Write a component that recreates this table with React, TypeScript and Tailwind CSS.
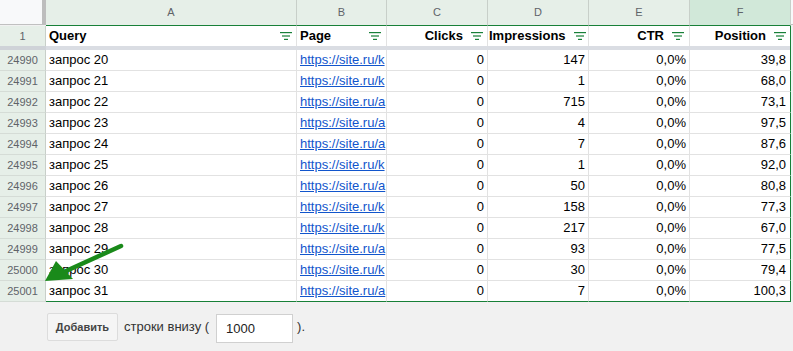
import React from "react";

type Row = { n: number; q: string; link: string; clicks: string; imp: string; ctr: string; pos: string };

const rows: Row[] = [
  { n: 24990, q: "запрос 20", link: "k", clicks: "0", imp: "147", ctr: "0,0%", pos: "39,8" },
  { n: 24991, q: "запрос 21", link: "k", clicks: "0", imp: "1", ctr: "0,0%", pos: "68,0" },
  { n: 24992, q: "запрос 22", link: "a", clicks: "0", imp: "715", ctr: "0,0%", pos: "73,1" },
  { n: 24993, q: "запрос 23", link: "a", clicks: "0", imp: "4", ctr: "0,0%", pos: "97,5" },
  { n: 24994, q: "запрос 24", link: "a", clicks: "0", imp: "7", ctr: "0,0%", pos: "87,6" },
  { n: 24995, q: "запрос 25", link: "k", clicks: "0", imp: "1", ctr: "0,0%", pos: "92,0" },
  { n: 24996, q: "запрос 26", link: "a", clicks: "0", imp: "50", ctr: "0,0%", pos: "80,8" },
  { n: 24997, q: "запрос 27", link: "k", clicks: "0", imp: "158", ctr: "0,0%", pos: "77,3" },
  { n: 24998, q: "запрос 28", link: "k", clicks: "0", imp: "217", ctr: "0,0%", pos: "67,0" },
  { n: 24999, q: "запрос 29", link: "a", clicks: "0", imp: "93", ctr: "0,0%", pos: "77,5" },
  { n: 25000, q: "запрос 30", link: "k", clicks: "0", imp: "30", ctr: "0,0%", pos: "79,4" },
  { n: 25001, q: "запрос 31", link: "a", clicks: "0", imp: "7", ctr: "0,0%", pos: "100,3" },
];

function FilterIcon() {
  return (
    <svg width="12" height="8" viewBox="0 0 12 8" className="shrink-0">
      <rect x="0" y="0" width="12" height="1.2" fill="#188038" />
      <rect x="2" y="3.4" width="8" height="1.2" fill="#188038" />
      <rect x="4" y="6.8" width="4" height="1.2" fill="#188038" />
    </svg>
  );
}

const font = { fontFamily: '"Liberation Sans", Arial, sans-serif' };

export default function App() {
  return (
    <div className="relative w-[793px] h-[351px] bg-[#f1f1f1] overflow-hidden" style={font}>
      {/* Column letters */}
      <div className="flex h-[26px]">
        <div className="w-[42px] h-[25px] bg-[#f8f9fa] border-b border-[#c0c0c0]" />
        <div className="w-[4px] h-[25px] bg-[#bdbdbd]" />
        {[
          ["A", "w-[251px]", "bg-[#e6efe8]"],
          ["B", "w-[90px]", "bg-[#e6efe8]"],
          ["C", "w-[101px]", "bg-[#e6efe8]"],
          ["D", "w-[101px]", "bg-[#e6efe8]"],
          ["E", "w-[101px]", "bg-[#e6efe8]"],
          ["F", "w-[101px]", "bg-[#d1e8d9]"],
        ].map(([l, w, bg]) => (
          <div
            key={l}
            className={`${w} ${bg} h-[26px] border-r border-[#c8cfc9] border-b border-b-[#188038] flex items-center justify-center text-[11px] text-[#5f6368]`}
          >
            {l}
          </div>
        ))}
        <div className="flex-1 bg-[#f8f9fa] h-[25px] border-b border-[#c0c0c0]" />
      </div>

      {/* Header row 1 */}
      <div className="flex h-[20px]">
        <div className="w-[46px] bg-[#e6efe8] border-r border-[#c8cfc9] flex items-center justify-center text-[11px] text-[#5f6368]">
          1
        </div>
        <div className="w-[251px] bg-white border-r border-[#e2e2e2] flex items-center pl-[3px] pr-[4px] text-[13px] font-bold text-black">
          <span className="flex-1">Query</span>
          <FilterIcon />
        </div>
        <div className="w-[90px] bg-white border-r border-[#e2e2e2] flex items-center pl-[3px] pr-[5px] text-[13px] font-bold text-black">
          <span className="flex-1">Page</span>
          <FilterIcon />
        </div>
        <div className="w-[101px] bg-white border-r border-[#e2e2e2] flex items-center justify-end gap-[8px] pr-[4px] text-[13px] font-bold text-black">
          <span>Clicks</span>
          <FilterIcon />
        </div>
        <div className="w-[101px] bg-white border-r border-[#e2e2e2] flex items-center pl-[1px] gap-[8px] text-[13px] font-bold text-black whitespace-nowrap">
          <span>Impressions</span>
          <FilterIcon />
        </div>
        <div className="w-[101px] bg-white border-r border-[#e2e2e2] flex items-center justify-end gap-[8px] pr-[5px] text-[13px] font-bold text-black">
          <span>CTR</span>
          <FilterIcon />
        </div>
        <div className="w-[101px] bg-white border-r border-[#188038] flex items-center justify-end gap-[8px] pr-[4px] text-[13px] font-bold text-black">
          <span>Position</span>
          <FilterIcon />
        </div>
      </div>

      {/* Freeze bar */}
      <div className="flex h-[4px]">
        <div className="w-[46px] bg-[#cfd3d8]" />
        <div className="w-[745px] bg-[#dadde3] border-r border-[#188038]" />
      </div>

      {/* Data rows */}
      {rows.map((r, i) => {
        const last = i === rows.length - 1;
        const bb = last ? "border-b border-b-[#188038]" : "border-b border-b-[#e2e2e2]";
        return (
          <div key={r.n} className="flex h-[21px]">
            <div className="w-[46px] bg-[#e6efe8] border-r border-[#c8cfc9] border-b border-b-[#d5dcd6] flex items-center justify-center text-[11px] text-[#5f6368]">
              {r.n}
            </div>
            <div className={`w-[251px] bg-white border-r border-[#e2e2e2] ${bb} flex items-center pl-[3px] text-[13px] text-black`}>
              {r.q}
            </div>
            <div className={`w-[90px] bg-white border-r border-[#e2e2e2] ${bb} flex items-center pl-[3px] text-[13px] overflow-hidden whitespace-nowrap`}>
              <span className="text-[#1155cc] underline">{`https://site.ru/${r.link}`}</span>
            </div>
            <div className={`w-[101px] bg-white border-r border-[#e2e2e2] ${bb} flex items-center justify-end pr-[3px] text-[13px] text-black`}>
              {r.clicks}
            </div>
            <div className={`w-[101px] bg-white border-r border-[#e2e2e2] ${bb} flex items-center justify-end pr-[3px] text-[13px] text-black`}>
              {r.imp}
            </div>
            <div className={`w-[101px] bg-white border-r border-[#e2e2e2] ${bb} flex items-center justify-end pr-[3px] text-[13px] text-black`}>
              {r.ctr}
            </div>
            <div className={`w-[101px] bg-white border-r border-[#188038] ${bb} flex items-center justify-end pr-[4px] text-[13px] text-black`}>
              {r.pos}
            </div>
          </div>
        );
      })}

      {/* Bottom controls */}
      <div className="flex items-center pl-[47px] pt-[9px]">
        <button className="h-[28px] w-[71px] bg-[#f5f5f5] border border-[#dcdcdc] rounded-[2px] text-[11px] font-bold text-[#444]">
          Добавить
        </button>
        <span className="ml-[6px] text-[13px] text-[#333]">строки внизу (</span>
        <div className="ml-[7px] mt-[3px] w-[77px] h-[29px] bg-white border border-[#d0d0d0] flex items-center pl-[9px] text-[13px] text-[#222]">
          1000
        </div>
        <span className="ml-[4px] text-[13px] text-[#333]">).</span>
      </div>

      {/* Arrow */}
      <svg className="absolute left-0 top-0 pointer-events-none" width="793" height="351" viewBox="0 0 793 351">
        <line x1="121" y1="246" x2="66" y2="271" stroke="#1a8a1a" strokeWidth="4.5" strokeLinecap="round" />
        <polygon points="45,281 56,261 73,279" fill="#1a8a1a" />
      </svg>
    </div>
  );
}
